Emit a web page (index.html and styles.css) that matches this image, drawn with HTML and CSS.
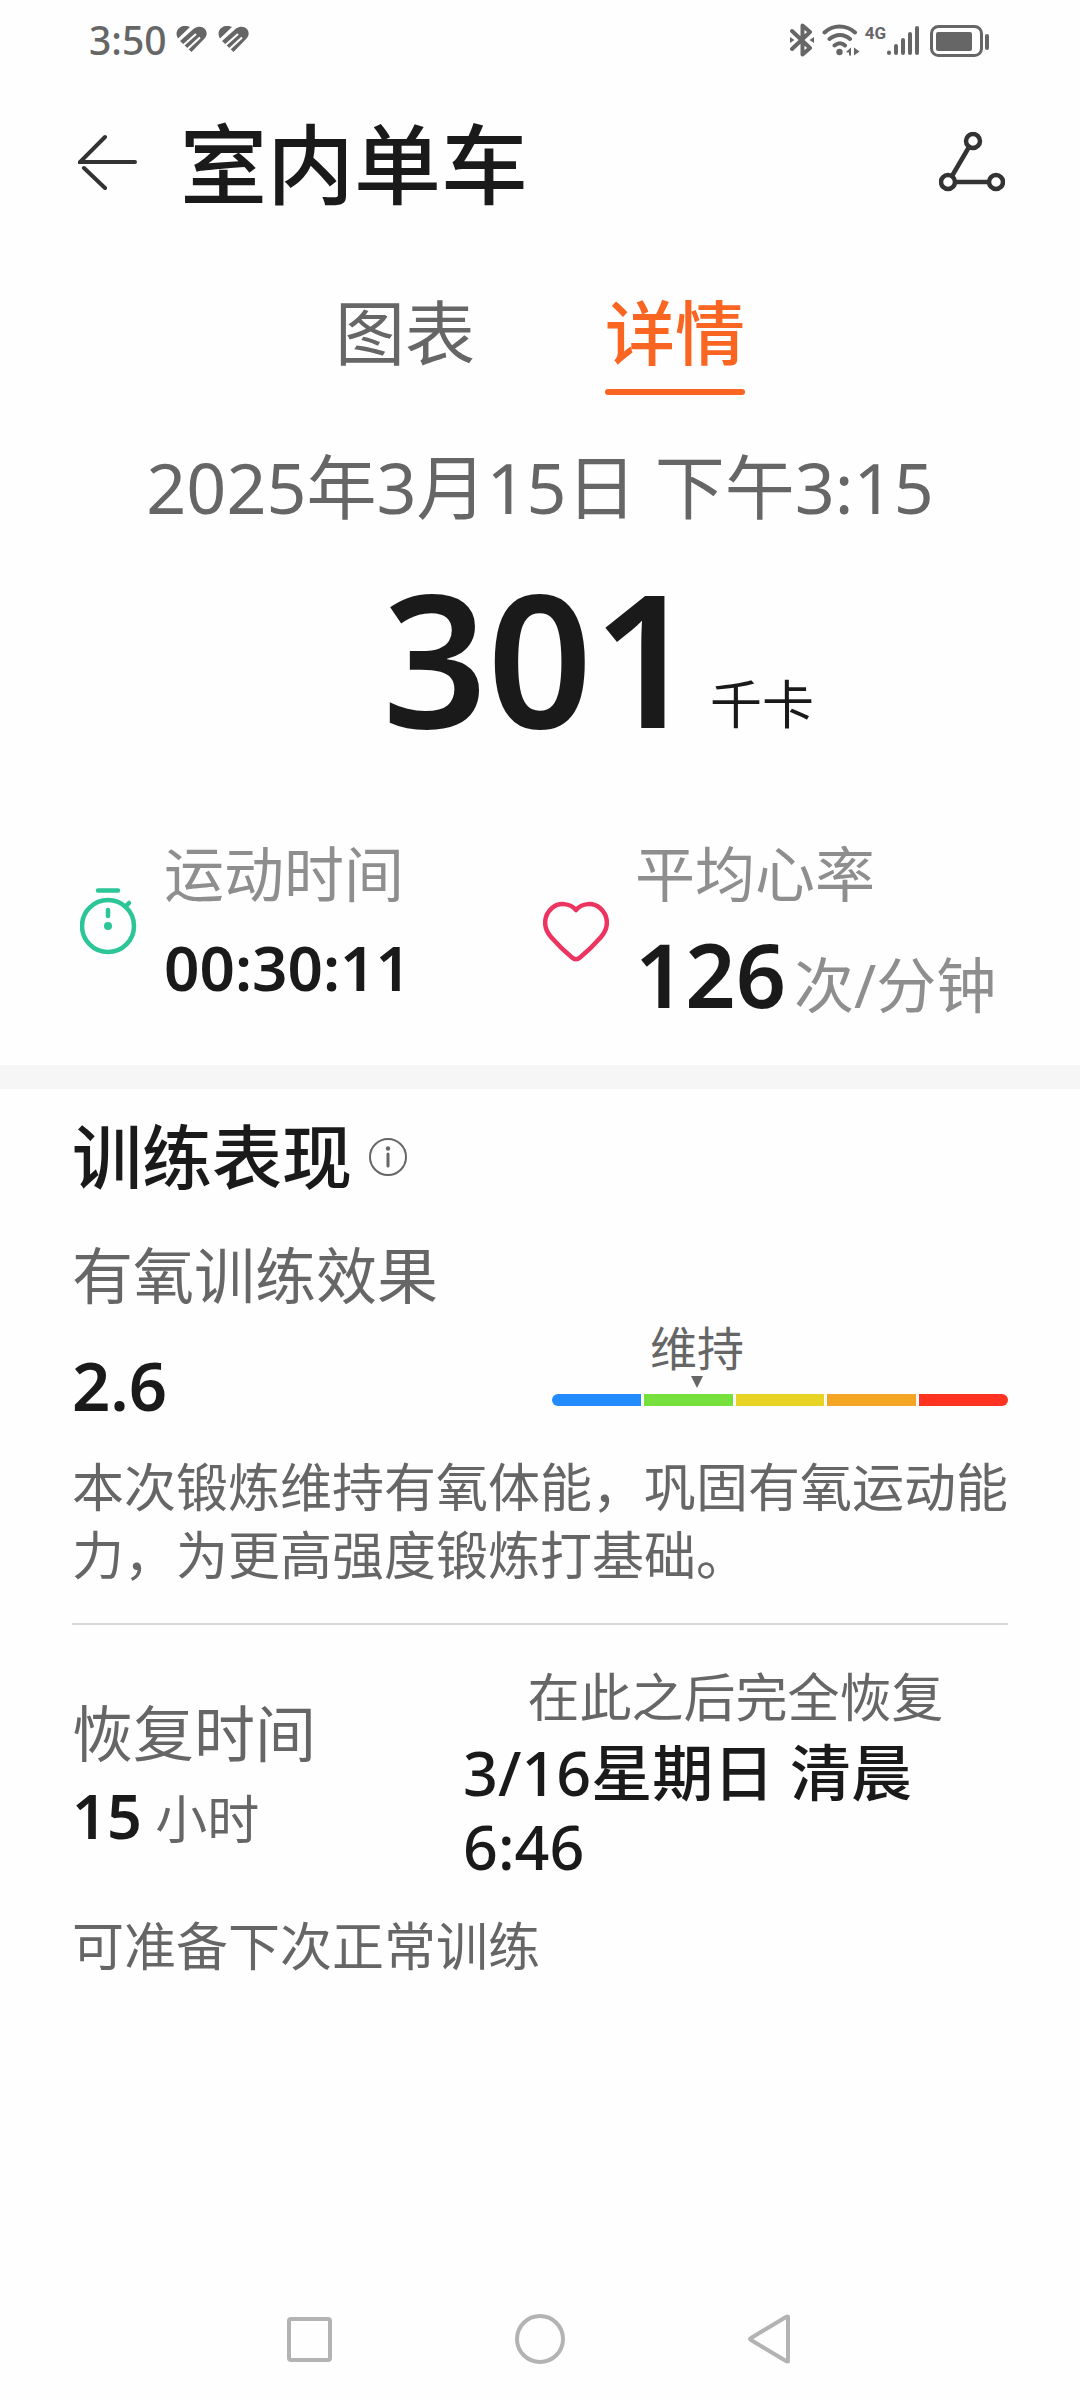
FILE: index.html
```
<!DOCTYPE html>
<html lang="zh-CN">
<head>
    <meta charset="UTF-8">
    <meta name="viewport" content="width=device-width, initial-scale=1.0">
    <title>室内单车</title>
    <link rel="stylesheet" href="styles.css">
</head>
<body>
    <!-- 状态栏 -->
    <div class="status-bar">
        <div class="status-left">
            <span class="clock">3:50</span>
            <svg class="health-icon" width="32" height="28" viewBox="0 0 32 28">
                <path d="M2 12.500C-3 4 6 -3 14 1ZM4 15L18 2.500C27 -3 34 6 29 12L15.500 26Z" fill="#666"/>
                <path d="M6.500 20L20 8M10.500 24L24 11.500" stroke="#fefefe" stroke-width="2"/>
            </svg>
            <svg class="health-icon" width="32" height="28" viewBox="0 0 32 28">
                <path d="M2 12.500C-3 4 6 -3 14 1ZM4 15L18 2.500C27 -3 34 6 29 12L15.500 26Z" fill="#666"/>
                <path d="M6.500 20L20 8M10.500 24L24 11.500" stroke="#fefefe" stroke-width="2"/>
            </svg>
        </div>
        <div class="status-right">
            <svg width="24" height="34" viewBox="0 0 24 34" fill="none" stroke="#666" stroke-width="4" stroke-linejoin="round" stroke-linecap="round">
                <path d="M2 8L20 25L12.500 31.500V2.500L20 9L2 26"/>
                <path d="M0 14L4.500 17L0 20ZM24 14L19.500 17L24 20Z" fill="#666" stroke="none"/>
            </svg>
            <svg class="wifi" width="38" height="34" viewBox="0 0 38 34" fill="none" stroke="#666" stroke-width="4" stroke-linecap="round">
                <path d="M2.500 9.500C11 1.500 24 1.500 33 9.500M7.500 16C14 10.500 22 10.500 28 16M12.500 22.500C16 19.500 20 19.500 23 22.500"/>
                <circle cx="17.500" cy="29" r="3.200" fill="#666" stroke="none"/>
                <path d="M24.500 28.500L29 24.500V32.500H27V29.500H24.500ZM32 24.500L37.500 28.500L32 32.500Z" fill="#666" stroke="none"/>
            </svg>
            <span class="network">4G</span>
            <svg width="34" height="34" viewBox="0 0 34 34" stroke="#666" stroke-width="4" stroke-linecap="round">
                <path d="M3 29.500V30M10 23V30M17 17V30M24 11V30M31 5V30"/>
            </svg>
            <svg class="battery" width="60" height="34" viewBox="0 0 60 34">
                <rect x="1.500" y="3.500" width="50" height="29" rx="7" fill="none" stroke="#666" stroke-width="3"/>
                <rect x="6" y="9" width="36" height="19" rx="2" fill="#666"/>
                <rect x="55" y="11" width="4" height="16" rx="2" fill="#666"/>
            </svg>
        </div>
    </div>

    <header class="header">
        <button class="icon-button" aria-label="返回">
            <svg width="60" height="56" viewBox="0 0 60 56" fill="none" stroke="#333" stroke-width="4" stroke-linecap="round">
                <path d="M57 28H2L27 3M6 34L27 54"/>
            </svg>
        </button>
        <h1>室内单车</h1>
        <button class="icon-button share" aria-label="轨迹">
            <svg width="66" height="60" viewBox="0 0 66 60" fill="none" stroke="#333" stroke-width="4.500">
                <circle cx="34" cy="9" r="7"/>
                <circle cx="9" cy="50" r="7"/>
                <circle cx="57" cy="50" r="7"/>
                <path d="M30 15L13 44M16 50H50"/>
            </svg>
        </button>
    </header>

    <nav class="tabs">
        <a href="#chart">图表</a>
        <a href="#detail" class="active">详情</a>
    </nav>

    <main>
        <section class="summary">
            <p class="date">2025年3月15日 下午3:15</p>
            <p class="calories"><span class="number">301</span><span class="unit">千卡</span></p>

            <div class="metrics">
                <div class="metric">
                    <svg width="58" height="82" viewBox="0 0 58 82" fill="none" stroke="#2bc597" stroke-width="4.500" stroke-linecap="round">
                        <path d="M18 2.500H38M28 22V28M46 18L49 15"/>
                        <circle cx="28" cy="38" r="26"/>
                        <circle cx="28" cy="38" r="4" fill="#2bc597" stroke="none"/>
                    </svg>
                    <div>
                        <p class="label">运动时间</p>
                        <p class="time">00:30:11</p>
                    </div>
                </div>
                <div class="metric">
                    <svg width="66" height="66" viewBox="0 -6 66 66" fill="none" stroke="#ed3460" stroke-width="4.500" stroke-linejoin="round">
                        <path d="M33 8C27 1 16 0 9 6C0 14 0 26 8 35C15 43 21 49 29 55.500Q33 59 37 55.500C45 49 51 43 58 35C66 26 66 14 57 6C50 0 39 1 33 8Z"/>
                    </svg>
                    <div>
                        <p class="label">平均心率</p>
                        <p class="rate"><span class="number">126</span>次/分钟</p>
                    </div>
                </div>
            </div>
        </section>

        <section class="performance">
            <div class="section-title">
                <h2>训练表现</h2>
                <button class="icon-button" aria-label="说明">
                    <svg width="38" height="38" viewBox="0 0 38 38" fill="none" stroke="#666" stroke-width="2">
                        <circle cx="19" cy="19" r="18"/>
                        <path d="M19 16V28" stroke-width="3" stroke-linecap="round"/>
                        <circle cx="19" cy="10.500" r="2.200" fill="#666" stroke="none"/>
                    </svg>
                </button>
            </div>
            <h3>有氧训练效果</h3>
            <div class="effect">
                <p class="score">2.6</p>
                <div class="gauge">
                    <div class="pointer">
                        <span>维持</span>
                        <svg width="12" height="12" viewBox="0 0 12 12"><path d="M0 0H12L6 12Z" fill="#666"/></svg>
                    </div>
                    <div class="levels">
                        <i class="blue"></i>
                        <i class="green"></i>
                        <i class="yellow"></i>
                        <i class="orange"></i>
                        <i class="red"></i>
                    </div>
                </div>
            </div>
            <p class="text">本次锻炼维持有氧体能，巩固有氧运动能力，为更高强度锻炼打基础。</p>

            <div class="recovery">
                <div class="remaining">
                    <h3>恢复时间</h3>
                    <p class="hours"><strong>15</strong> 小时</p>
                </div>
                <div class="recovered">
                    <p class="recovered-label">在此之后完全恢复</p>
                    <p class="recovered-date">3/16星期日 清晨 6:46</p>
                </div>
            </div>
            <p class="text">可准备下次正常训练</p>
        </section>
    </main>

    <!-- 系统导航键 -->
    <div class="system-nav">
        <button class="icon-button" aria-label="最近任务">
            <svg width="50" height="50" viewBox="0 0 50 50" fill="none" stroke="#b3b3b3" stroke-width="4">
                <rect x="4" y="5" width="41" height="41" rx="2"/>
            </svg>
        </button>
        <button class="icon-button" aria-label="主页">
            <svg width="50" height="50" viewBox="0 0 50 50" fill="none" stroke="#b3b3b3" stroke-width="4">
                <circle cx="25" cy="25" r="23"/>
            </svg>
        </button>
        <button class="icon-button" aria-label="后退">
            <svg width="50" height="50" viewBox="0 0 50 50" fill="none" stroke="#b3b3b3" stroke-width="4" stroke-linejoin="round">
                <path d="M43 3V47Q43 48 41 47L6 26Q4 25 6 24L41 3Q43 2 43 3Z"/>
            </svg>
        </button>
    </div>
</body>
</html>
```
FILE: styles.css
```
* {
    box-sizing: border-box;
}

body {
    display: flex;
    flex-direction: column;
    min-height: 100vh;
    margin: 0;
    background-color: #fefefe;
    color: #1a1a1a;
    font-family: "Noto Sans", "Noto Sans CJK SC", sans-serif;
}

h1, h2, h3, p {
    margin: 0;
    font-weight: 400;
}

svg {
    display: block;
    flex-shrink: 0;
}

.icon-button {
    padding: 0;
    border: none;
    background: none;
    cursor: pointer;
}

/* 状态栏 */
.status-bar {
    display: flex;
    justify-content: space-between;
    align-items: center;
    height: 80px;
    padding: 0 90px 0 89px;
    color: #666;
}

.status-left,
.status-right {
    display: flex;
    align-items: center;
}

.clock {
    margin-right: 9px;
    font-size: 39px;
    font-weight: 500;
    line-height: 40px;
}

.health-icon {
    margin-right: 10px;
}

.wifi {
    margin-left: 8px;
}

.network {
    align-self: flex-start;
    margin-left: 5px;
    font-family: Roboto, sans-serif;
    font-size: 17px;
    font-weight: 700;
    line-height: 20px;
}

.battery {
    margin-left: 10px;
}

/* 标题和标签页 */
.header {
    display: flex;
    align-items: center;
    height: 164px;
    padding: 0 75px 0 78px;
}

.header h1 {
    flex: 1;
    padding-top: 4px;
    margin-left: 42px;
    font-size: 87px;
    font-weight: 500;
    line-height: 100px;
}

.tabs {
    display: flex;
    justify-content: center;
    gap: 130px;
    margin-top: 44px;
}

.tabs a {
    padding-bottom: 17px;
    color: #666;
    font-size: 70px;
    line-height: 90px;
    text-decoration: none;
}

.tabs a.active {
    position: relative;
    color: #fa6522;
    font-weight: 500;
}

.tabs a.active::after {
    content: "";
    position: absolute;
    left: 0;
    right: 0;
    bottom: 0;
    height: 6px;
    border-radius: 3px;
    background-color: #fa6522;
}

/* 运动概要 */
.date {
    margin-top: 42px;
    color: #666;
    font-size: 70px;
    line-height: 100px;
    text-align: center;
}

.calories {
    display: grid;
    grid-template-columns: 1fr auto 1fr;
    align-items: end;
    column-gap: 12px;
    margin-top: 20px;
}

.calories .number {
    grid-column: 2;
    font-size: 184px;
    font-weight: 600;
    line-height: 200px;
}

.calories .unit {
    font-size: 52px;
    line-height: 106px;
}

.metrics {
    display: grid;
    grid-template-columns: 463px 1fr;
    margin-top: 77px;
    padding: 0 72px 41px 80px;
}

.metric {
    display: flex;
    align-items: center;
    gap: 26px;
}

.label {
    color: #8e8e8e;
    font-size: 60px;
    line-height: 80px;
}

.time,
.rate {
    height: 110px;
    white-space: nowrap;
}

.time {
    font-size: 62px;
    font-weight: 600;
    line-height: 106px;
}

.rate {
    color: #8e8e8e;
    font-size: 60px;
    line-height: 120px;
}

.rate .number {
    margin-right: 8px;
    color: #1a1a1a;
    font-size: 88px;
    font-weight: 600;
}

/* 训练表现 */
.performance {
    padding: 23px 72px 0;
    border-top: 24px solid #f6f6f6;
}

.section-title {
    display: flex;
    align-items: center;
    gap: 17px;
}

.section-title h2 {
    font-size: 70px;
    font-weight: 500;
    line-height: 90px;
}

h3 {
    color: #666;
    font-size: 61px;
    line-height: 80px;
}

.section-title + h3 {
    margin-top: 34px;
}

.effect {
    display: flex;
    justify-content: space-between;
    align-items: flex-end;
    height: 90px;
}

.score {
    font-size: 67px;
    font-weight: 600;
    line-height: 42px;
}

.gauge {
    width: 456px;
}

.pointer {
    display: flex;
    flex-direction: column;
    align-items: center;
    width: 290px;
    color: #666;
    font-size: 47px;
    line-height: 56px;
}

.levels {
    display: flex;
    gap: 3px;
    margin-top: 6px;
}

.levels i {
    flex: 1;
    height: 12px;
}

.blue {
    border-radius: 6px 0 0 6px;
    background-color: #228cff;
}

.green {
    background-color: #76e03c;
}

.yellow {
    background-color: #e6d324;
}

.orange {
    background-color: #f5a524;
}

.red {
    border-radius: 0 6px 6px 0;
    background-color: #ff3320;
}

.text {
    color: #666;
    font-size: 52px;
    line-height: 68px;
}

.effect + .text {
    margin-top: 47px;
}

/* 恢复时间 */
.recovery {
    display: flex;
    justify-content: space-between;
    align-items: center;
    margin: 34px 0 28px;
    padding-top: 33px;
    border-top: 2px solid #d8d8d8;
}

.remaining {
    padding-top: 12px;
}

.hours {
    color: #666;
    font-size: 52px;
    line-height: 84px;
}

.hours strong {
    color: #1a1a1a;
    font-size: 61px;
    font-weight: 600;
}

.recovered {
    width: 545px;
}

.recovered-label {
    color: #666;
    font-size: 52px;
    line-height: 78px;
    text-align: center;
}

.recovered-date {
    font-size: 61px;
    font-weight: 500;
    line-height: 74px;
}

.system-nav {
    display: flex;
    justify-content: center;
    align-items: center;
    gap: 180px;
    height: 122px;
    margin-top: auto;
}
```
